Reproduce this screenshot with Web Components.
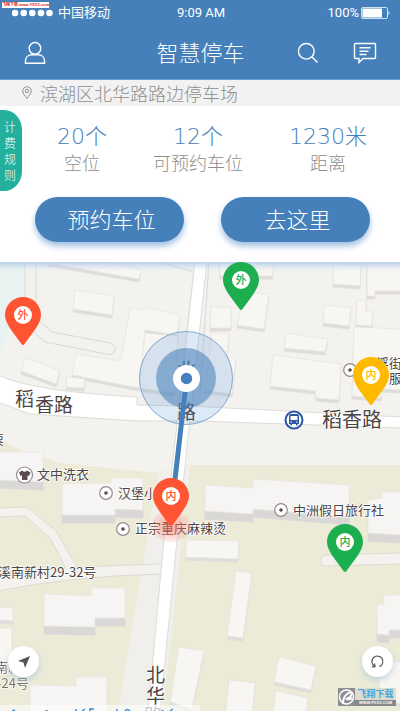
<!DOCTYPE html>
<html lang="zh-CN">
<head>
<meta charset="utf-8">
<meta name="viewport" content="width=device-width, initial-scale=1">
<title>智慧停车</title>
<style>
body { margin: 0; font-family: "Noto Sans CJK SC", "Liberation Sans", sans-serif; --blue: #4680bb; }
</style>
</head>
<body>
<parking-app></parking-app>
<script>
function define(name, html) {
  const template = document.createElement('template');
  template.innerHTML = html;
  customElements.define(name, class extends HTMLElement {
    constructor() {
      super();
      this.attachShadow({ mode: 'open' }).append(template.content.cloneNode(true));
    }
  });
}

define('status-bar', `
<style>
:host { display: grid; grid-template-columns: 1fr auto 1fr; align-items: center; height: 26px; padding: 0 10px 0 12px; color: #fff; font: 13px/26px Roboto, "Noto Sans CJK SC", sans-serif; position: relative; }
.left { display: flex; align-items: center; gap: 5px; }
.right { display: flex; align-items: center; justify-content: flex-end; gap: 2px; }
svg { display: block; }
.mark { position: absolute; left: 2px; top: 2px; background: #fff; color: #d22; font: bold 4px/6px "Liberation Sans", "Noto Sans CJK SC", sans-serif; white-space: nowrap; height: 6px; }
</style>
<div class="left">
<svg width="41" height="8" fill="#fff"><circle cx="3" cy="4" r="3.3"/><circle cx="11.7" cy="4" r="3.3"/><circle cx="20.3" cy="4" r="3.3"/><circle cx="29" cy="4" r="3.3"/><circle cx="37.5" cy="4" r="3.3"/></svg>
<span>中国移动</span></div>
<span>9:09 AM</span>
<div class="right"><span>100%</span><svg width="29" height="12"><rect x=".5" y=".5" width="26" height="11" rx="1.5" fill="none" stroke="#cfe0f1"/><rect x="1.5" y="1.5" width="19.5" height="9" fill="#fff"/><path d="M27.5 4q2 2 0 4z" fill="#fff"/></svg></div>
<span class="mark">飞翔下载 www.YXXZ.com</span>`);

define('nav-bar', `
<style>
:host { display: flex; align-items: center; height: 53px; padding: 0 20px; color: #fff; border-bottom: 1px solid #6c9dd0; }
h1 { flex: 1; margin: 0; font-size: 22px; line-height: 32px; font-weight: 300; text-align: center; padding: 0 0 4px 58px; }
button { width: 30px; height: 32px; padding: 0; border: 0; background: none; color: inherit; display: grid; place-items: center; }
.end { display: flex; gap: 27px; }
svg { fill: none; stroke: currentColor; stroke-width: 1.4; }
</style>
<button aria-label="我的"><svg width="22" height="24"><circle cx="11" cy="7.3" r="5.8"/><path d="M1.5 22.3v-2.5c0-3.6 2.8-6 6.5-6h6c3.7 0 6.5 2.4 6.5 6v2.5z"/></svg></button>
<h1><slot></slot></h1>
<div class="end">
<button aria-label="搜索"><svg width="22" height="22"><circle cx="9.3" cy="9.3" r="7.8"/><path d="M14.8 14.8 20.5 20.5"/></svg></button>
<button aria-label="消息"><svg width="24" height="22"><path d="M2.5 1.5h19q1 0 1 1v13q0 1-1 1H10l-4 4v-4H2.5q-1 0-1-1v-13q0-1 1-1z"/><path d="M6.5 5.7h11M6.5 9.2h9M6.5 12.5h7"/></svg></button>
</div>`);

define('place-row', `
<style>
:host { display: flex; align-items: center; gap: 8px; height: 26px; padding-left: 22px; background: #f2f2f2; color: #8e8e8e; font-size: 18px; line-height: 26px; font-weight: 300; }
svg { fill: none; stroke: #909090; }
</style>
<svg width="10" height="14"><path d="M5 12.5C3.5 10 .7 8 .7 5a4.3 4.3 0 0 1 8.6 0c0 3-2.8 5-4.3 7.500z"/><circle cx="5" cy="5" r="1.700"/></svg>
<span><slot></slot></span>`);

define('stat-item', `
<style>
:host { display: block; text-align: center; font-weight: 300; }
.value { color: var(--blue); font: 200 22px/26px "DejaVu Sans Light", "DejaVu Sans", "Noto Sans CJK SC", sans-serif; }
.label { color: #8e8e8e; font-size: 18px; line-height: 24px; }
</style>
<div class="value"><slot name="value"></slot></div><div class="label"><slot></slot></div>`);

define('pill-button', `
<style>
:host { display: block; flex: 1; }
button { width: 100%; height: 45px; border: 0; border-radius: 23px; background: var(--blue); color: #fff; font: 300 22px/32px "Noto Sans CJK SC", sans-serif; box-shadow: 0 4px 6px #9fbfe3; padding: 0 0 4px 4px; }
</style>
<button><slot></slot></button>`);

define('rule-tab', `
<style>
:host { display: block; position: absolute; left: 0; top: 4px; }
button { width: 22px; height: 81px; border: 0; padding: 0 2px 0 0; background: #23b09d; color: #fff; border-radius: 0 18px 18px 0 / 0 20px 20px 0; font: 300 12px/16px "Noto Sans CJK SC", sans-serif; word-break: break-all; }
span { display: block; width: 12px; margin: 0 auto; }
</style>
<button><span><slot></slot></span></button>`);

define('info-panel', `
<style>
:host { display: block; position: relative; background: #fff; padding: 18px 0 20px; }
.stats { display: flex; justify-content: space-between; padding: 0 33px 0 57px; }
.actions { display: flex; gap: 37px; padding: 0 30px 0 35px; margin-top: 23px; }
</style>
<rule-tab>计费规则</rule-tab>
<div class="stats">
<stat-item><span slot="value">20个</span>空位</stat-item>
<stat-item><span slot="value">12个</span>可预约车位</stat-item>
<stat-item><span slot="value">1230米</span>距离</stat-item>
</div>
<div class="actions"><pill-button>预约车位</pill-button><pill-button>去这里</pill-button></div>`);

define('map-pin', `
<style>
:host { position: absolute; display: block; width: 36px; height: 48px; color: var(--pin); }
svg { display: block; }
span { position: absolute; left: 9px; top: 9px; width: 18px; height: 18px; border-radius: 50%; background: #fff; font-size: 11px; line-height: 17px; font-weight: 500; text-align: center; }
</style>
<svg width="36" height="48"><path fill="currentColor" d="M18 0C8 0 0 8 0 18c0 8 7 16 16.500 29q1.500 2 3 0C29 34 36 26 36 18 36 8 28 0 18 0z"/></svg>
<span><slot></slot></span>`);

define('map-button', `
<style>
:host { position: absolute; display: block; bottom: 34px; }
button { width: 31px; height: 31px; border: 0; padding: 0; border-radius: 50%; background: #fff; box-shadow: 0 3px 6px #9fbad088; display: grid; place-items: center; }
</style>
<button><slot></slot></button>`);

define('site-mark', `
<style>
:host { position: absolute; right: 4px; bottom: 5px; display: flex; width: 58px; height: 18px; background: linear-gradient(#dddcd0 65%, #85898b 65%); overflow: hidden; }
.text { display: flex; flex-direction: column; align-items: center; flex: 1; }
b { font-size: 9px; line-height: 12px; color: #3da9dc; white-space: nowrap; }
small { font: bold 4px/6px "Liberation Sans", sans-serif; color: #fff; white-space: nowrap; }
svg { background: #8b8f91; flex: none; }
</style>
<svg width="17" height="18" fill="none" stroke="#fff"><circle cx="8.500" cy="9" r="7" stroke-width="1.500"/><path d="M5 16Q5 9 9 6t5-1q-1 5-6 6 4 1 6-1" stroke-width="2"/></svg>
<div class="text"><b>飞翔下载</b><small>WWW.PXXZ.COM</small></div>`);

define('map-ground', `
<style>
:host { display: block; position: absolute; inset: 0; }
svg { display: block; width: 100%; height: 100%; }
.b polygon { fill: #f7f6f3; stroke: #e6e4e1; stroke-width: .8; filter: drop-shadow(0 3px 0 #dfddda); }
.c polygon { fill: #f7f5f3; stroke: #e8e6e2; stroke-width: .8; filter: drop-shadow(0 8px 0 #d9d8d7); }
.road { fill: #fff; stroke: #dedcd6; }
.path { fill: #f3f2ee; stroke: #dddbd4; }
text { fill: #4c4344; font-size: 13px; paint-order: stroke; stroke: #fff; stroke-width: 1.500px; }
.big text { font-size: 20px; }
.big .mid { font-size: 19px; }
.poi circle { fill: #fff; stroke: #938b8d; stroke-width: 1.200; }
.poi .dot { fill: #57494c; stroke: none; }
</style>
<svg viewBox="0 262 400 449" preserveAspectRatio="xMinYMin slice">
<defs><linearGradient id="s" x2="0" y2="1"><stop stop-color="#a9c6e5" stop-opacity=".8"/><stop offset="1" stop-color="#c8dbee" stop-opacity="0"/></linearGradient>
<radialGradient id="r"><stop offset=".3" stop-color="#ff6b55" stop-opacity=".5"/><stop offset="1" stop-color="#ff9a88" stop-opacity=".15"/></radialGradient></defs>
<rect y="262" width="400" height="449" fill="#f3f2ef"/>
<polygon points="0,262 25,262 22,295 8,330 0,362" fill="#e9f3f1"/>
<path d="M0 440 25 452 60 463 158 473 188 465H400V711H0z" fill="#ecebd8"/>
<path d="M159 470 190 466 163 711H118L145 550z" fill="#f0efec"/>
<g fill="none" stroke="#dbd9d4"><path d="M25 262V297M142 257 194 272 187 330M36 262V318L52 332 110 343Q117 346 115 351T106 354L45 342 34 332M209 262 200 396M367 262V300"/></g>
<g class="b">
<polygon points="48,262 110,262 141,270 139,279 48,263"/>
<polygon points="75,290 114,296 112,315 73,309"/>
<polygon points="130,308 144,310 148,308 180,315 177,335 145,330 142,360 139,388 72,375 76,354 121,361"/>
<polygon points="145,333 178,336 174,393 139,388"/>
<polygon points="25,357 60,371 56,384 21,371"/><polygon points="66,377 85,379 84,388 66,387"/>
<polygon points="219,250 274,250 273,276 220,276"/><polygon points="245,292 269,294 264,329 237,325"/>
<polygon points="211,307 231,307 231,328 210,328"/><polygon points="212,332 229,334 227,357 236,358 232,394 205,390"/>
<polygon points="334,264 361,265 360,286 333,284"/><polygon points="324,305 351,308 349,326 323,323"/><polygon points="286,333 328,339 325,352 284,348"/>
<polygon points="273,355 341,364 339,400 316,398 315,391 270,386"/>
<polygon points="367,250 402,250 402,291 375,291 375,296 367,296"/><polygon points="357,300 366,301 366,311 373,312 372,326 356,325"/>
<polygon points="354,327 402,329 402,390 382,389 381,398 352,396"/>
<polygon points="187,540 239,541 238,559 185,557"/><polygon points="236,571 252,573 243,638 227,636"/><polygon points="279,657 316,666 311,690 274,682"/>
<polygon points="276,691 308,698 306,720 272,720"/><polygon points="229,680 255,683 252,720 225,720"/><polygon points="179,647 204,651 192,709 170,702"/>
<polygon points="-2,607 13,608 13,621 -2,620"/><polygon points="-2,628 12,628 12,656 -2,670"/><polygon points="379,662 402,662 402,704 379,700"/>
</g>
<g class="c">
<polygon points="-2,452 43,452 43,482 -2,480"/><polygon points="62,484 111,483 111,478 143,478 143,510 115,509 115,515 62,515"/>
<polygon points="44,594 92,596 92,588 125,588 125,618 95,618 95,627 44,626"/><polygon points="30,685 76,686 76,677 107,677 107,720 30,720"/>
<polygon points="205,485 253,488 253,479 349,485 349,517 253,509 253,514 205,511"/>
<polygon points="368,500 381,498 381,492 402,492 402,535 368,533"/><polygon points="377,605 384,604 384,595 402,595 402,630 389,630 389,635 377,634"/>
</g>
<path class="path" d="M-2 508 27 507 56 531 77 567 162 564V574Q70 576-2 591V576L66 568 50 538 25 516-2 517z"/>
<path class="path" d="M402 553 326 555a5.500 5.500 0 0 0 0 11L402 564"/>
<path class="road" d="M-2 375Q30 391 137 397V405L190 406 402 417V428L200 421 137 421 30 414-2 402z"/>
<path class="road" d="M195 261H207L176 550 160 712H148L163 550z"/>
<path d="M178 407 190 407 402 418V427L200 420 178 420z" fill="#fff"/>
<g class="big"><text class="mid" x="15" y="406">稻</text><text class="mid" x="35" y="412">香路</text><text x="322" y="427">稻香路</text>
<text class="mid" x="177" y="377">北</text><text class="mid" x="177" y="419">路</text><text class="mid" x="146" y="682">北</text><text class="mid" x="146" y="703">华</text><text class="mid" x="144" y="723" opacity=".6">路</text></g>
<g><text x="37" y="479">文中洗衣</text><text x="118" y="498">汉堡小</text><text x="135" y="533">正宗重庆麻辣烫</text><text x="293" y="515">中洲假日旅行社</text><text x="-2" y="577">溪南新村29-32号</text><text x="376" y="368">浮街</text><text x="389" y="383">服</text><text x="-9" y="445">票</text><text x="-5" y="672" opacity=".7">南新</text><text x="-3" y="688" opacity=".7">-24号</text></g>
<g class="poi"><circle cx="350" cy="370" r="6.300"/><circle class="dot" cx="350" cy="370" r="1.800"/><circle cx="106" cy="493" r="6.300"/><circle class="dot" cx="106" cy="493" r="1.800"/><circle cx="123" cy="529" r="6.300"/><circle class="dot" cx="123" cy="529" r="1.800"/><circle cx="281" cy="510" r="6.300"/><circle class="dot" cx="281" cy="510" r="1.800"/><circle cx="24.500" cy="475" r="8"/></g>
<path d="M22 470.500 19 472.500 20.500 476 22 475.500V480H27.500V475.500L29 476 30.500 472.500 27 470.500Q24.700 473 22 470.500z" fill="#5c4a4e"/>
<circle cx="294" cy="420" r="8.500" fill="#fff" stroke="#2a56a4" stroke-width="2"/><path fill-rule="evenodd" d="M289 416q0-2 2-2h6q2 0 2 2v8h-1.500v1.500H296V424h-4v1.500h-1.500V424H289zM290.500 416v4h7v-4zM290.500 421.500v1h1.500v-1zM296 421.500v1h1.500v-1z" fill="#2a56a4"/>
<circle cx="186" cy="378" r="46.500" fill="#4e8fd0" fill-opacity=".2" stroke="#86a9d0"/><circle cx="186" cy="378" r="30" fill="#4680bb" fill-opacity=".55"/>
<ellipse cx="171" cy="526" rx="20" ry="16" fill="url(#r)"/>
<path d="M186 384 172 505" stroke="#4680bb" stroke-width="5"/>
<circle cx="186.500" cy="378.500" r="13.500" fill="#fff"/><circle cx="186.500" cy="378.500" r="5.700" fill="#4680bb"/>
<path d="M0 705H200V711H0z" fill="#fff" opacity=".55"/>
<path d="M12 711l3-1M45 711h3M76 711v-2M82 711l3-2M90 711v-2h4M117 711v-2M125 711q2-3 5 0M161 711h3M170 711l3-2" stroke="#3e8be2" stroke-width="1.500" fill="none"/>
<rect y="262" width="400" height="9" fill="url(#s)"/>
</svg>`);

define('parking-map', `
<style>
:host { display: block; position: relative; flex: 1; min-height: 320px; overflow: hidden; }
.red { --pin: #ff5431; } .green { --pin: #1dae50; } .amber { --pin: #ffba00; }
.home { left: 8px; } .reload { right: 7px; }
</style>
<map-ground></map-ground>
<map-pin class="red" style="left:5px;top:35px">外</map-pin>
<map-pin class="green" style="left:223px;top:0">外</map-pin>
<map-pin class="amber" style="left:353px;top:95px">内</map-pin>
<map-pin class="red" style="left:153px;top:216px">内</map-pin>
<map-pin class="green" style="left:327px;top:262px">内</map-pin>
<map-button class="home"><svg width="14" height="14" role="img" aria-label="定位"><path d="M13 1 8 13 6.500 7.500 1 6z" fill="#555"/></svg></map-button>
<map-button class="reload"><svg width="15" height="15" role="img" aria-label="刷新" fill="none" stroke="#555" stroke-width="1.200"><path d="M9.500 12.600A5.500 5.500 0 1 0 4.500 12.200M1.800 12.800 5 12.600 4.600 9.500"/></svg></map-button>
<site-mark></site-mark>`);

define('parking-app', `
<style>
:host { display: flex; flex-direction: column; min-height: 100vh; }
header { background: var(--blue); }
</style>
<header><status-bar></status-bar><nav-bar>智慧停车</nav-bar></header>
<place-row>滨湖区北华路路边停车场</place-row>
<info-panel></info-panel>
<parking-map></parking-map>`);
</script>
</body>
</html>
